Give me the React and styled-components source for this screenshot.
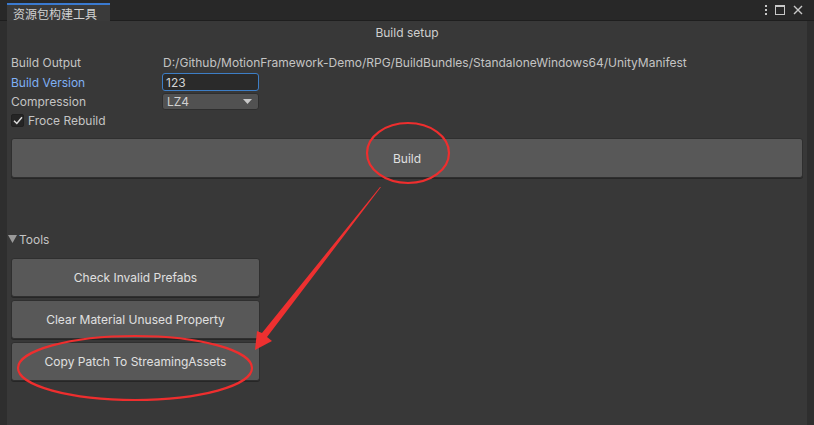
import React from "react";
import styled, { createGlobalStyle } from "styled-components";

const Global = createGlobalStyle`
  html, body { margin: 0; padding: 0; background: #383838; }
  body { font-family: Inter, "Noto Sans CJK SC", sans-serif; }
`;

const Window = styled.div`
  width: 814px;
  height: 425px;
  position: relative;
  display: flex;
  flex-direction: column;
  background: #383838;
  overflow: hidden;
  color: #c4c4c4;
  font-size: 12px;
`;

const TabBar = styled.div`
  height: 21px;
  flex: none;
  display: flex;
  align-items: flex-end;
  background: #282828;
  border-bottom: 1px solid #1e1e1e;
  padding-left: 7px;
  padding-right: 10px;
  box-sizing: border-box;
`;

const Tab = styled.div`
  width: 103px;
  height: 18px;
  box-sizing: border-box;
  background: #3a3a3a;
  border-top: 2px solid #3a7ad0;
  padding-left: 6px;
  display: flex;
  align-items: center;
  font-family: "Noto Sans CJK SC", sans-serif;
  font-size: 12px;
  color: #d2d2d2;
  margin-bottom: -1px;
`;

const Spacer = styled.div`
  flex: 1;
`;

const TabIcons = styled.div`
  display: flex;
  align-items: center;
  gap: 6px;
  height: 21px;
  color: #c8c8c8;
`;

const Body = styled.div`
  flex: 1;
  display: flex;
`;

const Edge = styled.div`
  width: ${(p) => p.$w}px;
  flex: none;
  background: #2e2e2e;
`;

const Main = styled.div`
  flex: 1;
  display: flex;
  flex-direction: column;
  padding: 3px 4px 0 4px;
`;

const Title = styled.div`
  text-align: center;
  height: 17px;
  line-height: 17px;
  color: #cfcfcf;
  margin-bottom: 12px;
`;

const Row = styled.div`
  display: flex;
  align-items: center;
  height: ${(p) => p.$h || 19}px;
`;

const Label = styled.div`
  width: 152px;
  color: ${(p) => (p.$active ? "#7fb0f5" : "#c4c4c4")};
`;

const Value = styled.div`
  color: #c4c4c4;
  white-space: nowrap;
`;

const TextField = styled.div`
  width: 97px;
  height: 18px;
  box-sizing: border-box;
  background: #2a2a2a;
  border: 1px solid #3d7ec6;
  border-radius: 3px;
  padding-left: 3px;
  display: flex;
  align-items: center;
  color: #d4d4d4;
  margin-left: -1px;
`;

const Dropdown = styled.div`
  width: 97px;
  height: 17px;
  box-sizing: border-box;
  background: #515151;
  border: 1px solid #2e2e2e;
  border-radius: 3px;
  padding: 0 6px 0 4px;
  display: flex;
  align-items: center;
  justify-content: space-between;
  color: #d0d0d0;
  margin-left: -1px;
`;

const Check = styled.div`
  width: 13px;
  height: 13px;
  box-sizing: border-box;
  background: #252525;
  border: 1px solid #202020;
  border-radius: 2px;
  display: flex;
  align-items: center;
  justify-content: center;
  margin-right: 4px;
`;

const Button = styled.button`
  width: ${(p) => (p.$wide ? "100%" : "249px")};
  height: ${(p) => p.$h || 39}px;
  box-sizing: border-box;
  background: #585858;
  border: 1px solid #2f2f2f;
  border-radius: 3px;
  color: #e0e0e0;
  font-family: Inter, sans-serif;
  font-size: 12px;
  padding: 0;
  display: flex;
  align-items: center;
  justify-content: center;
  box-shadow: 0 1px 0 #262626;
  flex: none;
`;

const BuildButton = styled(Button)`
  margin-top: 8px;
`;

const Foldout = styled.div`
  display: flex;
  align-items: center;
  height: 16px;
  margin: 53px 0 11px -3px;
  color: #c4c4c4;
  gap: 2px;
`;

const ButtonStack = styled.div`
  display: flex;
  flex-direction: column;
  gap: 3px;
`;

const Overlay = styled.svg`
  position: absolute;
  left: 0;
  top: 0;
  pointer-events: none;
`;

export default function App() {
  return (
    <>
      <Global />
      <Window>
        <TabBar>
          <Tab>资源包构建工具</Tab>
          <Spacer />
          <TabIcons>
            <svg width="4" height="12" viewBox="0 0 4 12">
              <rect x="1" y="1" width="2" height="2" fill="#c8c8c8" />
              <rect x="1" y="5" width="2" height="2" fill="#c8c8c8" />
              <rect x="1" y="9" width="2" height="2" fill="#c8c8c8" />
            </svg>
            <svg width="12" height="12" viewBox="0 0 12 12">
              <rect x="1.5" y="1.5" width="9" height="9" fill="none" stroke="#c8c8c8" strokeWidth="1" />
              <rect x="1" y="1" width="10" height="2" fill="#c8c8c8" />
            </svg>
            <svg width="12" height="12" viewBox="0 0 12 12">
              <path d="M2 2 L10 10 M10 2 L2 10" stroke="#c8c8c8" strokeWidth="1.4" />
            </svg>
          </TabIcons>
        </TabBar>
        <Body>
          <Edge $w={7} />
          <Main>
            <Title>Build setup</Title>
            <Row>
              <Label>Build Output</Label>
              <Value>D:/Github/MotionFramework-Demo/RPG/BuildBundles/StandaloneWindows64/UnityManifest</Value>
            </Row>
            <Row $h={20}>
              <Label $active>Build Version</Label>
              <TextField>123</TextField>
            </Row>
            <Row>
              <Label>Compression</Label>
              <Dropdown>
                LZ4
                <svg width="9" height="5" viewBox="0 0 9 5">
                  <path d="M0 0 L9 0 L4.5 5 Z" fill="#c8c8c8" />
                </svg>
              </Dropdown>
            </Row>
            <Row>
              <Check>
                <svg width="10" height="9" viewBox="0 0 10 9">
                  <path d="M1 4.8 L3.8 7.5 L9 1.2" fill="none" stroke="#dcdcdc" strokeWidth="1.5" />
                </svg>
              </Check>
              Froce Rebuild
            </Row>
            <BuildButton $wide $h={40}>Build</BuildButton>
            <Foldout>
              <svg width="9" height="8" viewBox="0 0 9 8">
                <path d="M0 0 L9 0 L4.5 8 Z" fill="#9a9a9a" />
              </svg>
              Tools
            </Foldout>
            <ButtonStack>
              <Button>Check Invalid Prefabs</Button>
              <Button>Clear Material Unused Property</Button>
              <Button>Copy Patch To StreamingAssets</Button>
            </ButtonStack>
          </Main>
          <Edge $w={7} />
        </Body>
        <Overlay width="814" height="425" viewBox="0 0 814 425">
          <ellipse cx="408" cy="153" rx="41" ry="30" fill="none" stroke="#ee2e2e" strokeWidth="2.2" />
          <ellipse cx="135" cy="368" rx="117" ry="32" fill="none" stroke="#ee2e2e" strokeWidth="2.2" />
          <polygon
            points="381,187 380,187 262,333 257,331 255,350 272,341 267,337"
            fill="#ee3030"
          />
        </Overlay>
      </Window>
    </>
  );
}
